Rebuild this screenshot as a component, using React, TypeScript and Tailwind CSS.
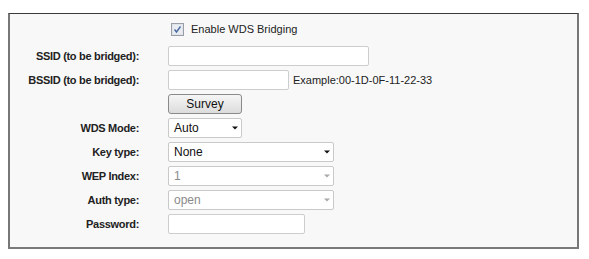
import React from 'react';

const Arrow = ({ disabled }: { disabled?: boolean }) => (
  <svg width="6" height="4" viewBox="0 0 6 4" className="shrink-0">
    <path d="M0 0.5 H6 L3 3.5 Z" fill={disabled ? '#a8a8a8' : '#111'} />
  </svg>
);

const FakeSelect = ({ value, width, disabled }: { value: string; width: string; disabled?: boolean }) => (
  <div
    className={`${width} h-5 flex items-center justify-between pl-[5px] pr-[3px] bg-white border border-[#c9c9c9] rounded-[2px] text-[12px] ${
      disabled ? 'text-[#8a8a8a]' : 'text-[#111]'
    }`}
  >
    <span>{value}</span>
    <Arrow disabled={disabled} />
  </div>
);

const TextBox = ({ width }: { width: string }) => (
  <div className={`${width} h-5 bg-white border border-[#cdcdcd] rounded-[2px]`} />
);

const Row = ({ label, children }: { label: string; children: React.ReactNode }) => (
  <div className="flex items-center h-5">
    <div className="w-[129px] text-right font-bold text-[11px] text-[#222] tracking-[-0.3px]">{label}</div>
    <div className="ml-[29px] flex items-center">{children}</div>
  </div>
);

export default function App() {
  return (
    <div className="w-[589px] h-[259px] bg-white pt-[13px] pl-[8px]" style={{ fontFamily: '"Liberation Sans", Arial, sans-serif' }}>
      <div className="w-[571px] h-[236px] bg-[#f8f8f8] border-t border-t-[#3a3a3a] border-l-2 border-l-[#777] border-r-2 border-r-[#777] border-b-2 border-b-[#7a7a7a] pt-[5px] flex flex-col gap-1">
        {/* checkbox row */}
        <div className="flex items-center h-5 mb-[3px]">
          <div className="ml-[161px] flex items-center">
            <svg width="13" height="13" viewBox="0 0 13 13">
              <rect x="0.5" y="0.5" width="12" height="12" fill="#dfe3ea" stroke="#9a9ea6" />
              <rect x="2" y="2" width="9" height="9" fill="#e9ecf1" />
              <path d="M3.5 6.5 L5.5 9 L9.5 3.5" fill="none" stroke="#4a69a0" strokeWidth="1.4" />
            </svg>
            <span className="ml-[7px] text-[11px] text-[#222]">Enable WDS Bridging</span>
          </div>
        </div>

        <Row label="SSID (to be bridged):">
          <TextBox width="w-[201px]" />
        </Row>

        <Row label="BSSID (to be bridged):">
          <TextBox width="w-[121px]" />
          <span className="ml-[4px] text-[11px] text-[#222]">Example:00-1D-0F-11-22-33</span>
        </Row>

        <div className="flex items-center h-5">
          <button className="ml-[158px] w-[74px] h-5 rounded-[3px] border border-[#8a8a8a] bg-gradient-to-b from-[#f6f6f6] to-[#dcdcdc] text-[12px] text-[#111] leading-none">
            Survey
          </button>
        </div>

        <Row label="WDS Mode:">
          <FakeSelect value="Auto" width="w-[74px]" />
        </Row>

        <Row label="Key type:">
          <FakeSelect value="None" width="w-[166px]" />
        </Row>

        <Row label="WEP Index:">
          <FakeSelect value="1" width="w-[166px]" disabled />
        </Row>

        <Row label="Auth type:">
          <FakeSelect value="open" width="w-[166px]" disabled />
        </Row>

        <Row label="Password:">
          <TextBox width="w-[137px]" />
        </Row>
      </div>
    </div>
  );
}
